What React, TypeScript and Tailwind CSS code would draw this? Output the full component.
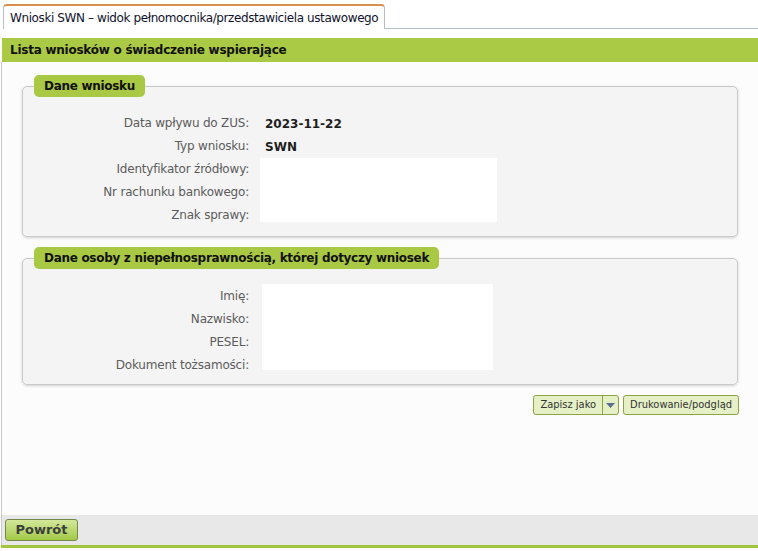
import React from 'react';

/* -------------------------------------------------------
 * Data
 * ----------------------------------------------------- */

const APPLICATION_ROWS = [
  { label: 'Data wpływu do ZUS:', value: '2023-11-22' },
  { label: 'Typ wniosku:', value: 'SWN' },
];

const APPLICATION_EMPTY = ['Identyfikator źródłowy:', 'Nr rachunku bankowego:', 'Znak sprawy:'];

const PERSON_EMPTY = ['Imię:', 'Nazwisko:', 'PESEL:', 'Dokument tożsamości:'];

/* -------------------------------------------------------
 * Small subcomponents
 * ----------------------------------------------------- */

function Section({ title, children, className = '' }: { title: string; children: React.ReactNode; className?: string }) {
  return (
    <fieldset
      className={`mx-[20px] px-[11px] bg-[#f4f4f4] border border-[#c9c9c9] rounded-[5px] shadow-[0_1px_3px_rgba(0,0,0,0.18)] ${className}`}
    >
      <legend className="h-[22px] px-[10px] leading-[22px] rounded-[5px] bg-[#a9c843] font-bold tracking-[-0.3px] text-[#111]">
        {title}
      </legend>
      {children}
    </fieldset>
  );
}

function Label({ children }: { children: React.ReactNode }) {
  return <div className="text-right text-[#5c5c5c] tracking-[-0.2px] leading-[15px] whitespace-nowrap">{children}</div>;
}

function GreenButton({ children, className = '' }: { children: React.ReactNode; className?: string }) {
  return (
    <button
      className={`h-[20px] px-[6px] leading-[18px] rounded-[3px] border border-[#8da343] bg-[#e6f0c6] text-[11px] font-stretch-condensed text-[#333] ${className}`}
    >
      {children}
    </button>
  );
}

/* -------------------------------------------------------
 * Main Component
 * ----------------------------------------------------- */

export default function App() {
  return (
    <div className="w-[758px] h-[551px] bg-white text-[12px] font-['DejaVu_Sans',sans-serif] overflow-hidden">

      {/* Tab strip */}
      <div className="flex items-end h-[29px] pt-[4px]">
        <div className="ml-[3px] h-[25px] px-[6px] flex items-center bg-white border border-b-0 border-[#b9bdc8] border-t-2 border-t-[#d98f4e] rounded-t-[4px] text-[#10122c] tracking-[-0.4px] whitespace-nowrap">
          Wnioski SWN – widok pełnomocnika/przedstawiciela ustawowego
        </div>
        <div className="flex-1 border-b border-[#b9bdc8]" />
      </div>

      {/* Main panel */}
      <div className="mt-[9px] ml-[1px]">
        <div className="ml-[1px] h-[24px] px-[8px] flex items-center bg-[#aac944] font-bold tracking-[-0.25px] text-[#111]">
          Lista wniosków o świadczenie wspierające
        </div>

        <div className="h-[453px] bg-[#fcfcfc] border-l border-[#c8c8c8] pt-[13px]">

          {/* Dane wniosku */}
          <Section title="Dane wniosku" className="pt-[15px] pb-[9px]">
            <div className="grid grid-cols-[226px_237px] gap-x-[11px] auto-rows-[23px] items-center -ml-[11px]">
              {APPLICATION_ROWS.map(row => (
                <React.Fragment key={row.label}>
                  <Label>{row.label}</Label>
                  <div className="pl-[5px] font-bold text-[#1e1e1e]">{row.value}</div>
                </React.Fragment>
              ))}
              <div className="col-start-2 row-start-3 row-span-3 self-start h-[64px] bg-white" />
              {APPLICATION_EMPTY.map((label, i) => (
                <div key={label} className={`col-start-1 ${['row-start-3', 'row-start-4', 'row-start-5'][i]}`}>
                  <Label>{label}</Label>
                </div>
              ))}
            </div>
          </Section>

          {/* Dane osoby */}
          <Section title="Dane osoby z niepełnosprawnością, której dotyczy wniosek" className="mt-[10px] pt-[15px] pb-[14px]">
            <div className="grid grid-cols-[226px_231px] gap-x-[13px] auto-rows-[21.5px] items-start -ml-[11px]">
              <div className="col-start-2 row-start-1 row-span-4 h-[86px] bg-white" />
              {PERSON_EMPTY.map((label, i) => (
                <div
                  key={label}
                  className={`col-start-1 ${['row-start-1 pt-[5px]', 'row-start-2 pt-[6px]', 'row-start-3 pt-[8px]', 'row-start-4 pt-[9px]'][i]}`}
                >
                  <Label>{label}</Label>
                </div>
              ))}
            </div>
          </Section>

          {/* Actions */}
          <div className="flex justify-end gap-[4px] mt-[10px] mr-[19px]">
            <div className="flex h-[20px] rounded-[3px] border border-[#8da343] bg-[#e6f0c6] text-[11px] font-stretch-condensed text-[#333]">
              <span className="px-[6px] leading-[18px]">Zapisz jako</span>
              <span className="w-[16px] border-l border-[#8da343] flex items-center justify-center">
                <svg width="9" height="5" viewBox="0 0 9 5">
                  <path d="M0 0h9L4.5 5z" fill="#5b6f92" />
                </svg>
              </span>
            </div>
            <GreenButton>Drukowanie/podgląd</GreenButton>
          </div>
        </div>

        {/* Footer */}
        <div className="h-[30px] bg-[#e8e8e8] border-l border-[#c8c8c8] flex items-center pl-[3px]">
          <button className="h-[22px] w-[73px] rounded-[3px] border border-[#75884a] bg-gradient-to-b from-[#d3e79a] to-[#a3c943] font-bold text-[13px] text-[#3b3f3a]">
            Powrót
          </button>
        </div>
        <div className="h-[3px] bg-[#a3c43f]" />
      </div>
    </div>
  );
}
